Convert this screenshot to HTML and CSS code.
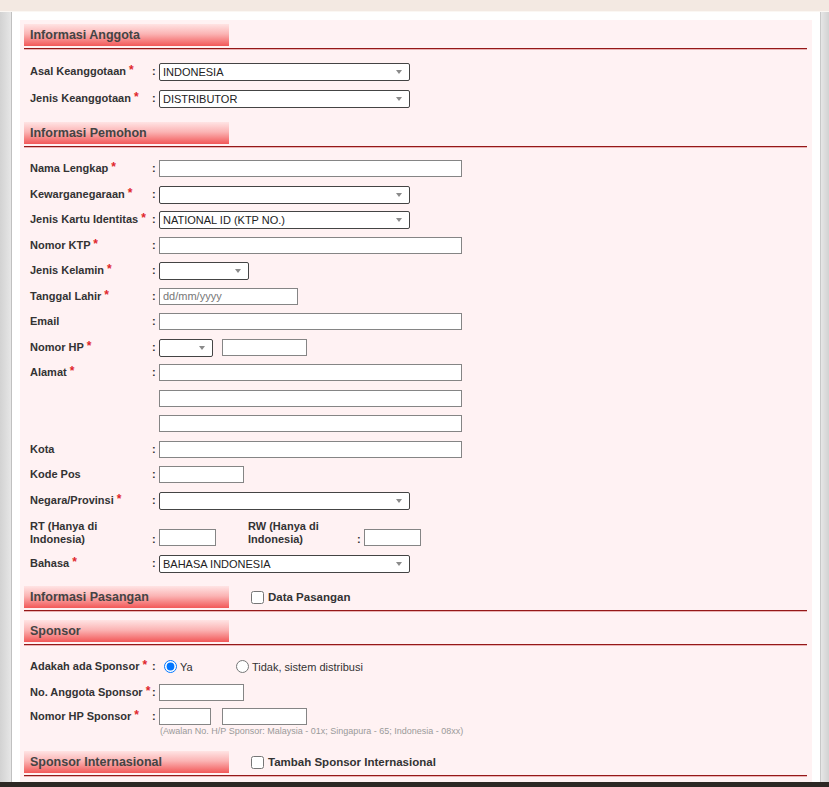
FILE: index.html
```html
<!DOCTYPE html>
<html lang="id">
<head>
    <meta charset="UTF-8">
    <meta name="viewport" content="width=device-width, initial-scale=1.0">
    <title>Pendaftaran Anggota</title>
    <link rel="stylesheet" href="styles.css">
</head>
<body>
    <div class="topbar"></div>
    <div class="frame">
        <div class="gutter gutter-left"></div>
        <main class="page">
            <form class="panel">

                <section class="sec">
                    <div class="sec-head"><h2 class="sec-title">Informasi Anggota</h2></div>
                    <div class="fields fields-tall">
                        <div class="row">
                            <label class="lbl">Asal Keanggotaan <span class="req">*</span></label><span class="colon">:</span>
                            <div class="field"><span class="select w-sel"><select><option>INDONESIA</option></select></span></div>
                        </div>
                        <div class="row">
                            <label class="lbl">Jenis Keanggotaan <span class="req">*</span></label><span class="colon">:</span>
                            <div class="field"><span class="select w-sel"><select><option>DISTRIBUTOR</option></select></span></div>
                        </div>
                    </div>
                </section>

                <section class="sec">
                    <div class="sec-head"><h2 class="sec-title">Informasi Pemohon</h2></div>
                    <div class="fields">
                        <div class="row">
                            <label class="lbl">Nama Lengkap <span class="req">*</span></label><span class="colon">:</span>
                            <div class="field"><input class="input w-full" type="text"></div>
                        </div>
                        <div class="row">
                            <label class="lbl">Kewarganegaraan <span class="req">*</span></label><span class="colon">:</span>
                            <div class="field"><span class="select w-sel"><select><option></option></select></span></div>
                        </div>
                        <div class="row">
                            <label class="lbl">Jenis Kartu Identitas <span class="req">*</span></label><span class="colon">:</span>
                            <div class="field"><span class="select w-sel"><select><option>NATIONAL ID (KTP NO.)</option></select></span></div>
                        </div>
                        <div class="row">
                            <label class="lbl">Nomor KTP <span class="req">*</span></label><span class="colon">:</span>
                            <div class="field"><input class="input w-full" type="text"></div>
                        </div>
                        <div class="row">
                            <label class="lbl">Jenis Kelamin <span class="req">*</span></label><span class="colon">:</span>
                            <div class="field"><span class="select w-gender"><select><option></option></select></span></div>
                        </div>
                        <div class="row">
                            <label class="lbl">Tanggal Lahir <span class="req">*</span></label><span class="colon">:</span>
                            <div class="field"><input class="input w-date" type="text" placeholder="dd/mm/yyyy"></div>
                        </div>
                        <div class="row">
                            <label class="lbl">Email</label><span class="colon">:</span>
                            <div class="field"><input class="input w-full" type="text"></div>
                        </div>
                        <div class="row">
                            <label class="lbl">Nomor HP <span class="req">*</span></label><span class="colon">:</span>
                            <div class="field field-pair">
                                <span class="select w-code"><select><option></option></select></span>
                                <input class="input w-short" type="text">
                            </div>
                        </div>
                        <div class="row">
                            <label class="lbl">Alamat <span class="req">*</span></label><span class="colon">:</span>
                            <div class="field"><input class="input w-full" type="text"></div>
                        </div>
                        <div class="row">
                            <span class="lbl"></span><span class="colon"></span>
                            <div class="field"><input class="input w-full" type="text"></div>
                        </div>
                        <div class="row">
                            <span class="lbl"></span><span class="colon"></span>
                            <div class="field"><input class="input w-full" type="text"></div>
                        </div>
                        <div class="row">
                            <label class="lbl">Kota</label><span class="colon">:</span>
                            <div class="field"><input class="input w-full" type="text"></div>
                        </div>
                        <div class="row">
                            <label class="lbl">Kode Pos</label><span class="colon">:</span>
                            <div class="field"><input class="input w-short" type="text"></div>
                        </div>
                        <div class="row">
                            <label class="lbl">Negara/Provinsi <span class="req">*</span></label><span class="colon">:</span>
                            <div class="field"><span class="select w-sel"><select><option></option></select></span></div>
                        </div>
                        <div class="row row-wrap">
                            <label class="lbl lbl-wrap">RT (Hanya di Indonesia)</label><span class="colon">:</span>
                            <div class="field field-rt">
                                <input class="input w-rt" type="text">
                                <label class="lbl lbl-wrap sub-lbl">RW (Hanya di Indonesia)</label><span class="colon">:</span>
                                <input class="input w-rt" type="text">
                            </div>
                        </div>
                        <div class="row">
                            <label class="lbl">Bahasa <span class="req">*</span></label><span class="colon">:</span>
                            <div class="field"><span class="select w-sel"><select><option>BAHASA INDONESIA</option></select></span></div>
                        </div>
                    </div>
                </section>

                <section class="sec">
                    <div class="sec-head">
                        <h2 class="sec-title">Informasi Pasangan</h2>
                        <label class="sec-check"><input type="checkbox"> Data Pasangan</label>
                    </div>
                </section>

                <section class="sec">
                    <div class="sec-head"><h2 class="sec-title">Sponsor</h2></div>
                    <div class="fields">
                        <div class="row">
                            <label class="lbl">Adakah ada Sponsor <span class="req">*</span></label><span class="colon">:</span>
                            <div class="field">
                                <label class="radio radio-first"><input type="radio" name="sponsor" checked>Ya</label>
                                <label class="radio"><input type="radio" name="sponsor">Tidak, sistem distribusi</label>
                            </div>
                        </div>
                        <div class="row">
                            <label class="lbl">No. Anggota Sponsor <span class="req">*</span></label><span class="colon">:</span>
                            <div class="field"><input class="input w-short" type="text"></div>
                        </div>
                        <div class="row row-hint">
                            <label class="lbl">Nomor HP Sponsor <span class="req">*</span></label><span class="colon">:</span>
                            <div class="field field-stack">
                                <div class="field-pair field-pair-wide">
                                    <input class="input w-code-in" type="text">
                                    <input class="input w-short" type="text">
                                </div>
                                <p class="hint">(Awalan No. H/P Sponsor: Malaysia - 01x; Singapura - 65; Indonesia - 08xx)</p>
                            </div>
                        </div>
                    </div>
                </section>

                <section class="sec">
                    <div class="sec-head">
                        <h2 class="sec-title">Sponsor Internasional</h2>
                        <label class="sec-check"><input type="checkbox"> Tambah Sponsor Internasional</label>
                    </div>
                </section>

            </form>
        </main>
        <div class="gutter gutter-right"></div>
    </div>
    <div class="statusbar"></div>
</body>
</html>
```

FILE: styles.css
```css
* {
    box-sizing: border-box;
}
body {
    margin: 0;
    font-family: "Liberation Sans", Arial, sans-serif;
    color: #333;
    background-color: #fff;
}
.topbar {
    height: 12px;
    background-color: #f3e9e2;
    border-bottom: 1px solid #fbf7f3;
}
.frame {
    display: flex;
    min-height: calc(100vh - 12px);
}
.gutter-left {
    width: 12px;
    background: linear-gradient(to right, #d2d2d2, #e6e6e6);
    border-right: 1px solid #c0c0c0;
}
.gutter-right {
    width: 9px;
    background: linear-gradient(to right, #e6e6e6, #d2d2d2);
    border-left: 1px solid #c8c8c8;
}
.page {
    flex: 1;
    padding: 8px 8px 0;
}
.panel {
    background-color: #fff2f3;
    padding: 4px 5px 20px 4px;
    margin: 0;
}

/* section headers */
.sec-head {
    display: flex;
    align-items: center;
    padding-bottom: 2px;
    border-bottom: 1px solid #951818;
    box-shadow: 0 1px 0 rgba(190, 60, 60, 0.35);
    margin-bottom: 9px;
}
.sec-title {
    width: 205px;
    height: 22px;
    margin: 0;
    padding-left: 6px;
    font-size: 12.5px;
    font-weight: bold;
    line-height: 22px;
    color: #444;
    background: linear-gradient(#ffe4e4, #fbb4b4 45%, #f25858);
}
.sec-check {
    display: flex;
    align-items: center;
    margin-left: 18px;
    font-size: 11.5px;
    font-weight: bold;
    color: #333;
}
.sec-check input {
    width: 13px;
    height: 13px;
    margin: 1px 4px 0 4px;
}

/* rows */
.fields {
    padding: 0 0 10px 6px;
}
.row {
    display: grid;
    grid-template-columns: 120px 9px 1fr;
    align-items: center;
    height: 25.5px;
}
.fields-tall .row {
    height: 27px;
}
.lbl {
    font-size: 11px;
    font-weight: bold;
    line-height: 13px;
    color: #333;
    white-space: nowrap;
}
.lbl-wrap {
    white-space: normal;
}
.req {
    color: #e0262b;
    font-size: 12px;
    vertical-align: 1px;
    line-height: 0;
}
.colon {
    font-size: 11px;
    font-weight: bold;
    line-height: 13px;
    padding-left: 2px;
}
.field {
    display: flex;
    align-items: center;
}
.field-pair {
    display: flex;
    align-items: center;
    gap: 9px;
}
.field-pair-wide {
    gap: 11px;
}

.row-wrap {
    height: 37.5px;
    align-items: end;
    padding-bottom: 5px;
}
.field-rt {
    align-items: flex-end;
}
.sub-lbl {
    width: 107px;
    margin-left: 32px;
}
.field-rt .colon {
    width: 9px;
}

.row-hint {
    height: auto;
    align-items: start;
}
.row-hint .lbl,
.row-hint .colon {
    line-height: 22px;
}
.field-stack {
    flex-direction: column;
    align-items: flex-start;
}
.field-stack .field-pair {
    height: 22px;
}
.hint {
    margin: -1px 0 0 1px;
    padding-bottom: 5px;
    font-size: 9px;
    line-height: 10px;
    color: #9a9a9a;
    white-space: nowrap;
}

/* controls */
.input {
    height: 17px;
    margin: 0;
    padding: 0 3px;
    border: 1px solid #858585;
    background-color: #fff;
    font: 11px "Liberation Sans", Arial, sans-serif;
    color: #222;
}
.input::placeholder {
    color: #777;
}
.select {
    position: relative;
    display: inline-block;
}
.select select {
    appearance: none;
    -webkit-appearance: none;
    width: 100%;
    height: 18px;
    margin: 0;
    padding: 0 14px 0 3px;
    border: 1px solid #444;
    border-radius: 2px;
    background-color: #fff;
    font: 11px "Liberation Sans", Arial, sans-serif;
    color: #222;
}
.select::after {
    content: "";
    position: absolute;
    right: 8px;
    top: 8px;
    border-left: 3px solid transparent;
    border-right: 3px solid transparent;
    border-top: 4px solid #8a8a8a;
    pointer-events: none;
}
.w-sel { width: 251px; }
.w-full { width: 303px; }
.w-gender { width: 90px; }
.w-date { width: 139px; }
.w-code { width: 54px; }
.w-code-in { width: 52px; }
.w-short { width: 85px; }
.w-rt { width: 57px; }

.radio {
    display: inline-flex;
    align-items: center;
    font-size: 11px;
    color: #333;
}
.radio input {
    width: 13px;
    height: 13px;
    margin: 0 3px 0 5px;
}
.radio-first {
    width: 72px;
}

.statusbar {
    position: fixed;
    left: 0;
    right: 0;
    bottom: 0;
    height: 5px;
    background-color: #2c2824;
}
```
